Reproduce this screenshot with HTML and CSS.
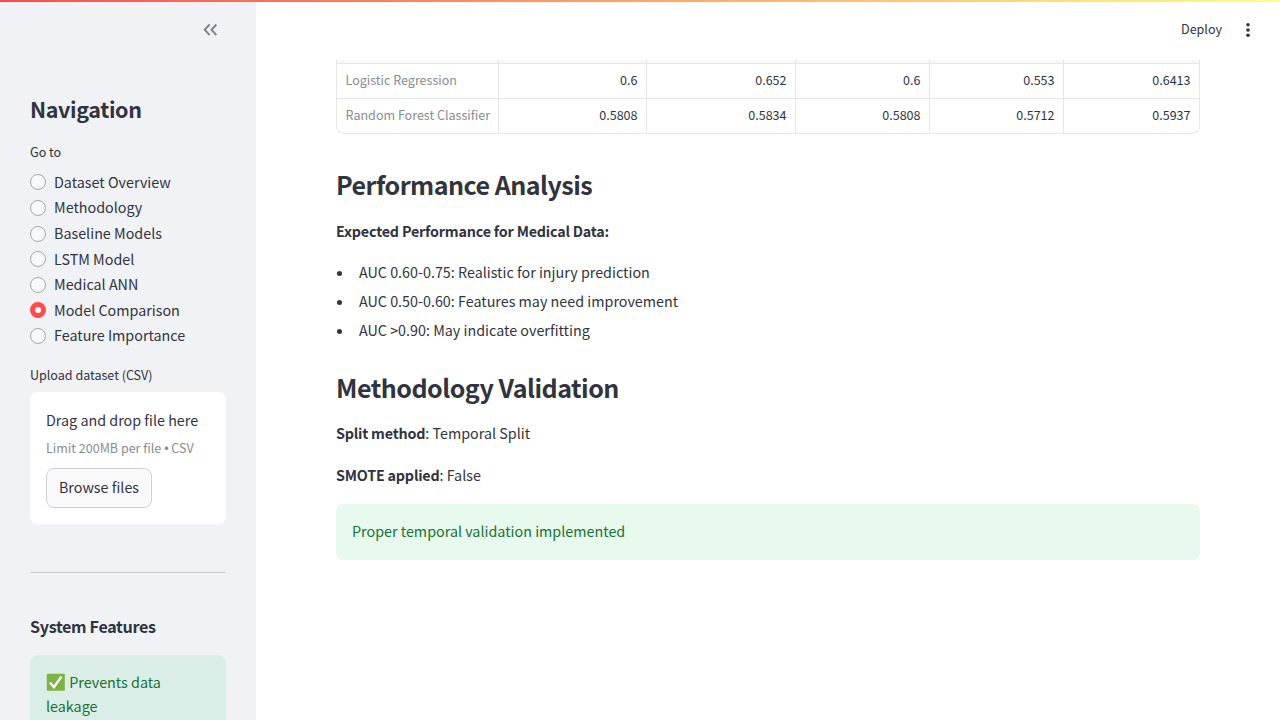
FILE: index.html
```html
<!DOCTYPE html>
<html lang="en">
<head>
<meta charset="utf-8">
<title>Model Comparison</title>
<link rel="stylesheet" href="styles.css">
</head>
<body>
<div class="decoration"></div>
<div class="app">
  <aside class="sidebar">
    <div class="sidebar-header">
      <svg class="collapse" width="20" height="20" viewBox="0 0 20 20" fill="none" stroke="#83858c" stroke-width="2"><path d="M9.6 4.5 4.7 9.8l4.9 5.3M16.4 4.5 11.5 9.8l4.9 5.3"/></svg>
    </div>
    <h2 class="nav-title">Navigation</h2>
    <div class="label">Go to</div>
    <div class="radios">
      <label class="radio"><span class="dot"></span><span class="radio-text">Dataset Overview</span></label>
      <label class="radio"><span class="dot"></span><span class="radio-text">Methodology</span></label>
      <label class="radio"><span class="dot"></span><span class="radio-text">Baseline Models</span></label>
      <label class="radio"><span class="dot"></span><span class="radio-text">LSTM Model</span></label>
      <label class="radio"><span class="dot"></span><span class="radio-text">Medical ANN</span></label>
      <label class="radio"><span class="dot checked"></span><span class="radio-text">Model Comparison</span></label>
      <label class="radio"><span class="dot"></span><span class="radio-text">Feature Importance</span></label>
    </div>
    <div class="label upload-label">Upload dataset (CSV)</div>
    <div class="uploader">
      <div class="drop-text">Drag and drop file here</div>
      <div class="limit">Limit 200MB per file <span class="bullet">•</span> CSV</div>
      <button class="browse">Browse files</button>
    </div>
    <hr class="divider">
    <h3 class="features-title">System Features</h3>
    <div class="alert side-alert"><svg class="check" width="19" height="18" viewBox="0 0 19 18"><rect x=".8" y=".8" width="18" height="17" rx="1" fill="#7cb342"/><path d="M4 9.6 8 14 15.4 3.6" fill="none" stroke="#fff" stroke-width="2.4"/></svg>Prevents data leakage</div>
  </aside>
  <main class="main">
    <header class="toolbar">
      <span class="deploy">Deploy</span>
      <svg class="kebab" width="6" height="16" viewBox="0 0 6 16" fill="#31333f"><circle cx="3" cy="2.8" r="1.8"/><circle cx="3" cy="8" r="1.8"/><circle cx="3" cy="13.2" r="1.8"/></svg>
    </header>
    <div class="content">
      <div class="table">
        <div class="row head"><span></span><span></span><span></span><span></span><span></span><span></span></div>
        <div class="row"><span class="name">Logistic Regression</span><span>0.6</span><span>0.652</span><span>0.6</span><span>0.553</span><span>0.6413</span></div>
        <div class="row"><span class="name">Random Forest Classifier</span><span>0.5808</span><span>0.5834</span><span>0.5808</span><span>0.5712</span><span>0.5937</span></div>
      </div>
      <h2 class="heading">Performance Analysis</h2>
      <p class="para"><b>Expected Performance for Medical Data:</b></p>
      <ul class="list">
        <li>AUC 0.60-0.75: Realistic for injury prediction</li>
        <li>AUC 0.50-0.60: Features may need improvement</li>
        <li>AUC &gt;0.90: May indicate overfitting</li>
      </ul>
      <h2 class="heading second">Methodology Validation</h2>
      <p class="para"><b>Split method</b>: Temporal Split</p>
      <p class="para smote"><b>SMOTE applied</b>: False</p>
      <div class="alert">Proper temporal validation implemented</div>
    </div>
  </main>
</div>
</body>
</html>
```
FILE: styles.css
```css
* { box-sizing: border-box; margin: 0; padding: 0; }
body {
  height: 720px;
  overflow: hidden;
  background: #fff;
  color: #31333f;
  font-family: "Noto Sans CJK SC", "Noto Sans", sans-serif;
  font-size: 14.33px;
  line-height: 24px;
}
b { font-weight: 600; letter-spacing: -0.2px; }
.decoration { height: 2px; background: linear-gradient(90deg, #ff4b4b, #fffd80); }
.app { display: flex; height: 718px; }
.sidebar { width: 256px; padding: 0 30px; background: #f0f2f6; overflow: hidden; flex: none; }
.sidebar-header { display: flex; justify-content: flex-end; height: 58px; padding: 18px 6px 0 0; }
.nav-title { height: 78px; padding-top: 34px; font-size: 21.5px; line-height: 29px; font-weight: 600; letter-spacing: -0.36px; }
.label { height: 32px; padding-top: 4px; font-size: 12.54px; line-height: 20px; }
.radios { display: grid; grid-auto-rows: 25.6px; height: 191px; padding-top: 0.4px; }
.radio { display: flex; align-items: flex-start; gap: 8px; }
.radio-text { margin-top: -0.55px; }
.dot { width: 16px; height: 16px; margin-top: 4px; border: 1px solid #a3a6b0; border-radius: 50%; background: #f9f9fb; }
.dot.checked { border: 5px solid #ff4b4b; background: #fff; }
.upload-label { height: 31px; }
.uploader { height: 132px; padding: 16px; border-radius: 8px; background: #fff; }
.limit { margin-top: 6px; color: #898b94; font-size: 12.54px; line-height: 20px; white-space: nowrap; }
.bullet { font-family: "Liberation Sans", sans-serif; line-height: 1; }
.browse { display: block; width: 106px; height: 40px; margin-top: 10px; padding-bottom: 2px; border: 1px solid #d0d1d6; border-radius: 8px; background: #f9f9fb; color: inherit; font: inherit; }
.divider { margin: 48px 0; border: 0; border-top: 1px solid #c9cacf; }
.features-title { height: 40px; margin-top: -6px; font-size: 16.12px; line-height: 22px; font-weight: 600; letter-spacing: -0.33px; }
.alert { height: 56px; padding: 15px 16px; border-radius: 8px; background: rgba(33, 195, 84, 0.1); color: #177233; white-space: nowrap; }
.side-alert { height: 90px; white-space: normal; }
.check { margin-right: 4.3px; vertical-align: -3px; }
.main { flex: 1; }
.toolbar { display: flex; justify-content: flex-end; align-items: center; gap: 23px; height: 58px; padding: 0 29px 2px 0; font-size: 12.54px; }
.deploy { padding-bottom: 2px; }
.content { padding: 0 80px; }
.table { border: 1px solid #e6e7ea; border-top: 0; border-radius: 0 0 8px 8px; height: 74px; overflow: hidden; font-size: 12.54px; }
.row { display: grid; grid-template-columns: 162px 148px 149px 134px 134px 135px; height: 35px; line-height: 32px; border-bottom: 1px solid #e6e7ea; }
.row:last-child { border-bottom: 0; }
.row.head { height: 4px; background: #f9f9fb; }
.row span { padding-right: 8.5px; border-right: 1px solid #e6e7ea; text-align: right; }
.row span:last-child { border-right: 0; }
.row .name { padding: 0 0 0 8.5px; color: #898b94; text-align: left; }
.heading { margin-top: 33px; font-size: 25.07px; line-height: 34px; font-weight: 600; letter-spacing: -0.52px; }
.para { margin-top: 18px; }
.list { margin-top: 14px; list-style: none; }
.list li { display: flex; align-items: center; gap: 17px; height: 29px; }
.list li::before { content: ""; width: 5px; height: 5px; margin: 4px 0 0 1px; border-radius: 50%; background: #31333f; }
.heading.second { margin-top: 26px; letter-spacing: -0.5px; }
.heading.second + .para { margin-top: 17px; }
.smote { margin-top: 18px; margin-bottom: 17px; }
```
